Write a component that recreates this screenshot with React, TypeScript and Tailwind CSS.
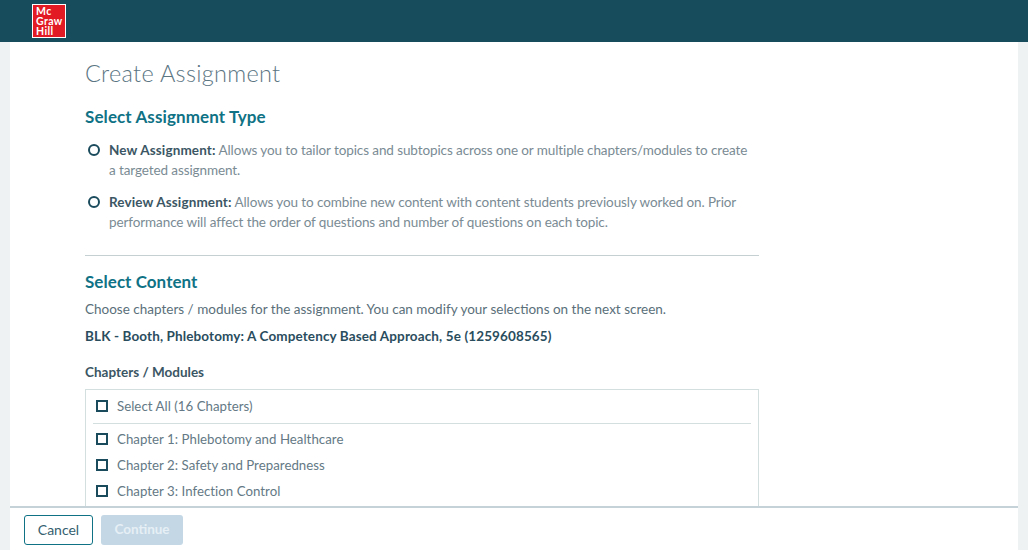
const font = { fontFamily: '"Lato", "Liberation Sans", sans-serif' };

function Radio() {
  return <span className="mt-[4px] h-3 w-3 shrink-0 rounded-full border-2 border-[#1a4b5c]" />;
}

function Check({ label }: { label: string }) {
  return (
    <div className="flex items-center pl-[3px]">
      <span className="h-3 w-3 shrink-0 border-2 border-[#1a4b5c]" />
      <span className="ml-[9px] text-[13.25px] leading-5 tracking-[0.03px] text-[#647985]">{label}</span>
    </div>
  );
}

export default function App() {
  return (
    <div style={font} className="flex h-[550px] w-[1028px] flex-col overflow-hidden bg-[#eef2f3]">
      <header className="flex h-[42px] shrink-0 items-start bg-[#174c5c] pl-8 pt-[4px]">
        <div className="flex h-[34px] w-[34px] items-center border border-white bg-[#e21a23] pl-[3px] text-[10.5px] font-bold leading-[10px] tracking-[0.4px] text-white">
          <span className="block">Mc<br />Graw<br />Hill</span>
        </div>
      </header>

      <div className="mx-[10px] flex min-h-0 flex-1 flex-col bg-white">
        <main className="min-h-0 flex-1 overflow-hidden pl-[75px]">
          <div className="w-[674px]">
            <h1 className="pt-[17px] text-[23.5px] font-light leading-7 tracking-[0.3px] text-[#5b7583]">Create Assignment</h1>
            <h2 className="mt-[18px] text-[17px] font-bold leading-6 tracking-[0.1px] text-[#0f7285]">Select Assignment Type</h2>

            <div className="mt-[11px] flex gap-[9px] pl-[3px] pr-2">
              <Radio />
              <p className="text-[13.5px] leading-5 tracking-[-0.1px] text-[#7a8b94]">
                <b className="tracking-[0.13px] text-[#3b5664]">New Assignment:</b> Allows you to tailor topics and subtopics across one or multiple chapters/modules to create a targeted assignment.
              </p>
            </div>
            <div className="mt-3 flex gap-[9px] pl-[3px] pr-2">
              <Radio />
              <p className="text-[13.5px] leading-5 tracking-[-0.1px] text-[#7a8b94]">
                <b className="tracking-[0.13px] text-[#3b5664]">Review Assignment:</b> Allows you to combine new content with content students previously worked on. Prior performance will affect the order of questions and number of questions on each topic.
              </p>
            </div>

            <hr className="mt-[23px] border-[#c5d0d3]" />

            <h2 className="mt-[14px] text-[17px] font-bold leading-6 tracking-[0.05px] text-[#0f7285]">Select Content</h2>
            <p className="mt-[5px] text-[13.5px] leading-5 text-[#5a6f7a]">Choose chapters / modules for the assignment. You can modify your selections on the next screen.</p>
            <p className="mt-[7px] text-[13.5px] font-bold leading-5 tracking-[0.12px] text-[#2a4d5e]">BLK - Booth, Phlebotomy: A Competency Based Approach, 5e (1259608565)</p>
            <p className="mt-4 text-[13.5px] font-bold leading-5 text-[#3b5664]">Chapters / Modules</p>

            <div className="mt-[7px] h-[140px] border border-[#d3dede] px-[7px] pt-[6px]">
              <Check label="Select All (16 Chapters)" />
              <hr className="mt-[7px] border-[#d3dede]" />
              <div className="mt-[5px] flex flex-col gap-[6px]">
                <Check label="Chapter 1: Phlebotomy and Healthcare" />
                <Check label="Chapter 2: Safety and Preparedness" />
                <Check label="Chapter 3: Infection Control" />
              </div>
            </div>
          </div>
        </main>

        <footer className="flex h-[44px] shrink-0 items-start gap-2 border-t-2 border-[#c5d3d8] bg-white pl-[14px] pt-[7px]">
          <button className="h-[30px] w-[69px] rounded-[3px] border border-[#0f7285] pb-[2px] text-[14px] text-[#35606f]">Cancel</button>
          <button className="h-[30px] w-[82px] rounded-[3px] bg-[#c3d7e5] pb-[1px] text-[13.5px] font-bold text-[#e6eff5]">Continue</button>
        </footer>
      </div>
    </div>
  );
}
